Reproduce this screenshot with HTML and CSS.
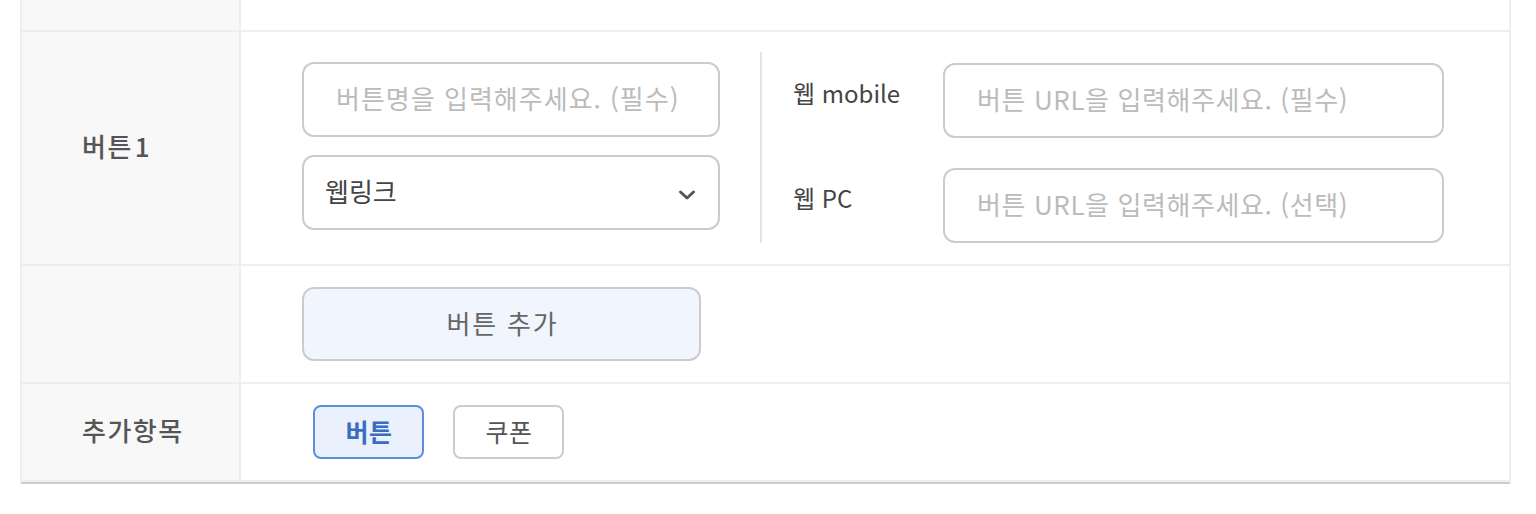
FILE: index.html
```html
<!DOCTYPE html>
<html lang="ko">
<head>
<meta charset="utf-8">
<title>버튼 설정</title>
<link rel="stylesheet" href="styles.css">
</head>
<body>
<div class="form">
  <div class="row row-top">
    <div class="th"></div>
    <div class="td"></div>
  </div>
  <div class="row row-button">
    <div class="th"><span class="ko">버튼</span><span class="num">1</span></div>
    <div class="td td-button">
      <div class="btn-left">
        <input class="input" type="text" placeholder="버튼명을 입력해주세요. (필수)">
        <div class="select">
          <span class="select-text">웹링크</span>
          <svg class="chevron" width="18" height="12" viewBox="0 0 18 12" aria-hidden="true">
            <path d="M2.5 3 L9 9 L15.5 3" fill="none" stroke="#555" stroke-width="3" stroke-linecap="round" stroke-linejoin="round"/>
          </svg>
        </div>
      </div>
      <div class="btn-right">
        <div class="url-row">
          <label class="url-label">웹 mobile</label>
          <input class="input input-url" type="text" placeholder="버튼 URL을 입력해주세요. (필수)">
        </div>
        <div class="url-row">
          <label class="url-label">웹 PC</label>
          <input class="input input-url" type="text" placeholder="버튼 URL을 입력해주세요. (선택)">
        </div>
      </div>
    </div>
  </div>
  <div class="row row-add">
    <div class="th"></div>
    <div class="td td-add">
      <button class="add-btn" type="button">버튼 추가</button>
    </div>
  </div>
  <div class="row row-extra">
    <div class="th">추가항목</div>
    <div class="td td-extra">
      <button class="chip chip-active" type="button">버튼</button>
      <button class="chip" type="button">쿠폰</button>
    </div>
  </div>
</div>
</body>
</html>
```

FILE: styles.css
```css
* {
  box-sizing: border-box;
}

html, body {
  margin: 0;
  padding: 0;
  background: #ffffff;
}

body {
  font-family: "Noto Sans CJK KR", "Noto Sans", sans-serif;
  color: #444;
}

.form {
  margin-left: 20px;
  width: 1491px;
  border-left: 2px solid #eeeeee;
  border-right: 2px solid #eeeeee;
  border-bottom: 2px solid #cccccc;
}

.row {
  display: grid;
  grid-template-columns: 219px 1fr;
  border-top: 2px solid #eeeeee;
}

.row-top {
  border-top: none;
  height: 30px;
}

.row-extra {
  border-bottom: 2px solid #eeeeee;
}

.th {
  background: #f8f8f8;
  border-right: 2px solid #eeeeee;
  display: flex;
  align-items: center;
  padding-left: 60px;
  padding-bottom: 6px;
  font-size: 26px;
  font-weight: 500;
  color: #555555;
  letter-spacing: 1.5px;
}

.th .num {
  margin-left: 2px;
}

.td {
  display: flex;
}

/* row: button 1 */
.td-button {
  height: 232px;
  padding: 20px 0 21px 61px;
  align-items: flex-start;
}

.btn-left {
  display: flex;
  flex-direction: column;
  gap: 18px;
  width: 418px;
  margin-top: 10px;
}

.input {
  display: block;
  width: 100%;
  height: 75px;
  border: 2px solid #cccccc;
  border-radius: 12px;
  padding: 0 28px 4px 32px;
  font-family: inherit;
  font-size: 26px;
  letter-spacing: 1px;
  color: #444;
  background: #fff;
  outline: none;
}

.input::placeholder {
  color: #bbbbbb;
}

.input-url {
  width: 501px;
  letter-spacing: 0.6px;
}

.select {
  height: 75px;
  border: 2px solid #cccccc;
  border-radius: 12px;
  padding: 0 22px 4px 21px;
  display: flex;
  align-items: center;
  justify-content: space-between;
  font-size: 26px;
  color: #444;
}

.chevron {
  display: block;
  margin-top: 8px;
}

.btn-right {
  margin-left: 40px;
  border-left: 2px solid #e4e4e4;
  height: 191px;
  padding: 11px 0 0 31px;
  display: flex;
  flex-direction: column;
  gap: 30px;
}

.url-row {
  display: flex;
  align-items: center;
}

.url-label {
  width: 150px;
  font-size: 24px;
  color: #444;
  padding-bottom: 16px;
}

/* row: add button */
.td-add {
  height: 116px;
  padding: 21px 0 21px 61px;
}

.add-btn {
  width: 399px;
  height: 74px;
  border: 2px solid #cccccc;
  border-radius: 12px;
  background: #f1f5fd;
  font-family: inherit;
  font-size: 26px;
  letter-spacing: 1.8px;
  padding: 0 0 4px 2px;
  color: #666666;
  cursor: pointer;
}

/* row: extra items */
.td-extra {
  height: 96px;
  padding: 21px 0 21px 72px;
  gap: 29px;
}

.chip {
  width: 111px;
  height: 54px;
  border: 2px solid #cccccc;
  border-radius: 8px;
  background: #ffffff;
  font-family: inherit;
  font-size: 25px;
  letter-spacing: 0.5px;
  padding: 0 0 3px 1px;
  color: #555555;
  cursor: pointer;
}

.chip-active {
  border-color: #5b8fd9;
  background: #eaf1fc;
  color: #3b6cc0;
  font-weight: 700;
}
```
